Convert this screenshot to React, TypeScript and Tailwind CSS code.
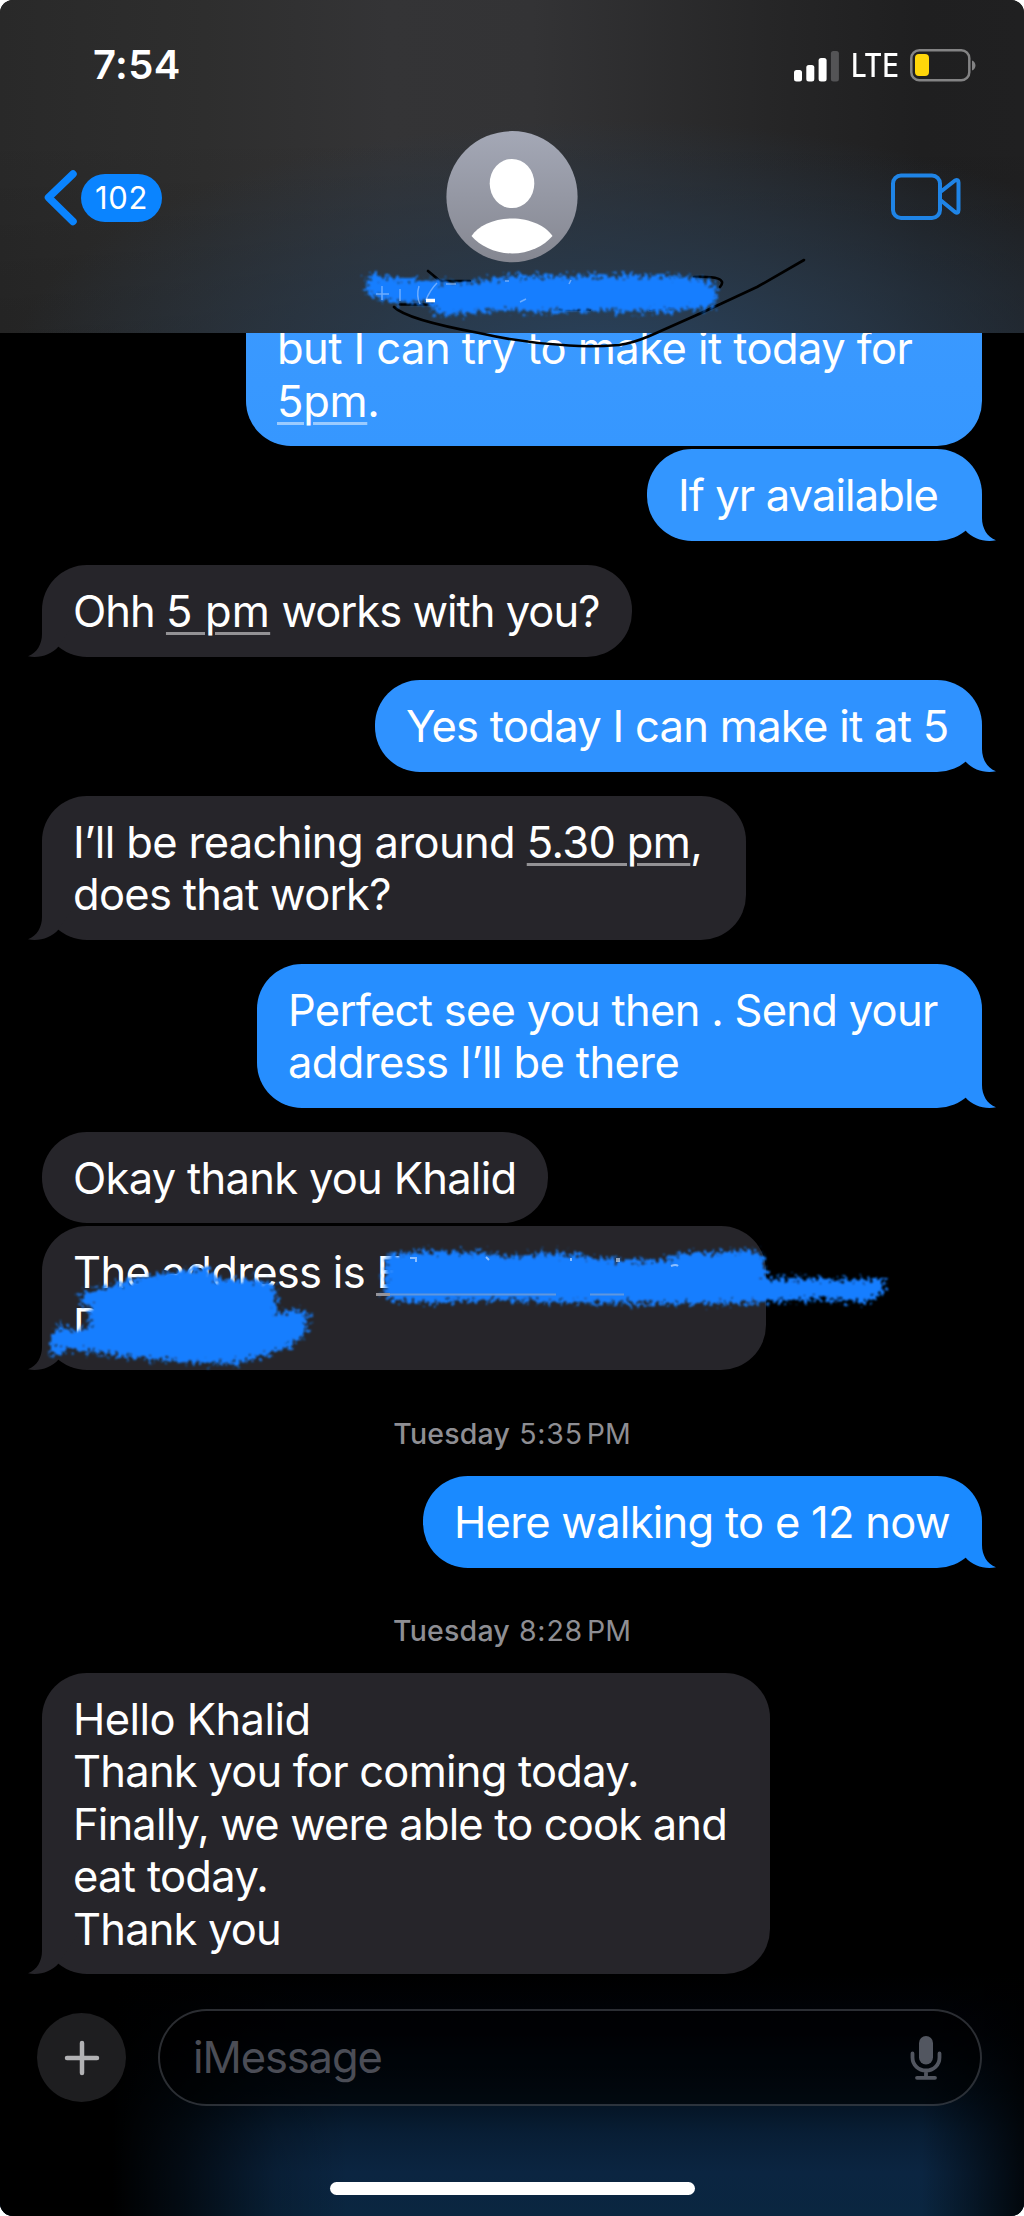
import type { ReactNode } from "react";
import clsx from "clsx";

type Line = { content: ReactNode; tracking: string };

type Message = {
  from: "me" | "them";
  className: string;
  lines: Line[];
  tail?: boolean;
  overlay?: ReactNode;
};

const Detected = ({ children }: { children: ReactNode }) => (
  <span className="underline decoration-white/50 decoration-[3px] underline-offset-[5px]">
    {children}
  </span>
);

// Rough crayon edge used by every marker stroke
const MarkerFilter = ({ id }: { id: string }) => (
  <filter id={id} x="-5%" y="-30%" width="110%" height="160%">
    <feTurbulence
      type="fractalNoise"
      baseFrequency="0.27"
      numOctaves="2"
      seed="7"
      result="noise"
    />
    <feDisplacementMap
      in="SourceGraphic"
      in2="noise"
      scale="21"
      xChannelSelector="R"
      yChannelSelector="G"
    />
    <feGaussianBlur stdDeviation="0.8" />
  </filter>
);

const AddressMarker = () => (
  <svg
    className="pointer-events-none absolute top-0 left-0 z-10"
    width="860"
    height="150"
    viewBox="42 1226 860 150"
    fill="none"
  >
    <defs>
      <MarkerFilter id="marker-address" />
    </defs>
    <g fill="#157eff" filter="url(#marker-address)">
      <path d="M388 1254 L431 1251 L481 1253 L514 1257 L539 1253 L574 1254 L596 1259 L660 1261 L681 1253 L717 1253 L756 1250 L765 1260 L767 1278 L824 1279 L883 1280 L885 1290 L868 1303 L824 1299 L771 1302 L696 1304 L610 1303 L550 1302 L485 1300 L428 1303 L394 1301 L384 1295 L386 1267 Z" />
      <path d="M80 1294 L110 1286 L160 1274 L196 1268 L210 1269 L217 1280 L250 1279 L273 1284 L277 1297 L276 1315 L298 1309 L308 1313 L307 1330 L293 1346 L267 1355 L233 1364 L187 1362 L147 1359 L107 1354 L67 1349 L55 1357 L50 1350 L52 1335 L62 1324 L75 1332 L89 1326 L90 1306 L81 1306 Z" />
    </g>
    <g stroke="#dbeaff" strokeWidth="2" opacity=".6">
      <path d="M410 1258h6v4M486 1257l3 3M571 1258v3M671 1266q5-2 7 0" />
      <path d="M618 1258v4" strokeWidth="4" />
    </g>
    <path
      d="M376 1294.5h14"
      stroke="#93939a"
      strokeWidth="3"
    />
    <path
      d="M390 1294.5h166M590 1294.5h34"
      stroke="#93a9c8"
      strokeWidth="2"
      opacity=".6"
    />
  </svg>
);

const messages: Message[] = [
  {
    from: "me",
    className: "mt-[3px] h-[92px] w-[335px] text-[#3396ff]",
    tail: true,
    lines: [{ content: "If yr available", tracking: "tracking-[-0.9px]" }],
  },
  {
    from: "them",
    className: "mt-[24px] h-[92px] w-[590px]",
    tail: true,
    lines: [
      {
        content: (
          <>
            Ohh{" "}
            <span className="tracking-[0.2px]">
              <Detected>5 pm</Detected>
            </span>{" "}
            works with you?
          </>
        ),
        tracking: "tracking-[-1px]",
      },
    ],
  },
  {
    from: "me",
    className: "mt-[23px] h-[92px] w-[607px] text-[#2f92ff]",
    tail: true,
    lines: [
      {
        content: "Yes today I can make it at 5",
        tracking: "tracking-[-0.72px]",
      },
    ],
  },
  {
    from: "them",
    className: "mt-[24px] h-[144px] w-[704px]",
    tail: true,
    lines: [
      {
        content: (
          <>
            I’ll be reaching around <Detected>5.30 pm</Detected>,
          </>
        ),
        tracking: "tracking-[-0.62px]",
      },
      { content: "does that work?", tracking: "tracking-[-0.7px]" },
    ],
  },
  {
    from: "me",
    className: "mt-[24px] h-[144px] w-[725px] text-[#268eff]",
    tail: true,
    lines: [
      {
        content: "Perfect see you then . Send your",
        tracking: "tracking-[-0.72px]",
      },
      { content: "address I’ll be there", tracking: "tracking-[-0.6px]" },
    ],
  },
  {
    from: "them",
    className: "mt-[24px] h-[91px] w-[506px]",
    lines: [
      { content: "Okay thank you Khalid", tracking: "tracking-[-0.72px]" },
    ],
  },
  {
    from: "them",
    className: "mt-[3px] h-[144px] w-[724px]",
    tail: true,
    lines: [
      { content: "The address is E", tracking: "tracking-[-0.7px]" },
      { content: "D", tracking: "tracking-normal" },
    ],
    overlay: <AddressMarker />,
  },
];

const afternoonMessages: Message[] = [
  {
    from: "me",
    className: "mt-[24px] h-[92px] w-[559px] text-[#1a8aff]",
    tail: true,
    lines: [
      { content: "Here walking to e 12 now", tracking: "tracking-[-0.73px]" },
    ],
  },
];

const eveningMessages: Message[] = [
  {
    from: "them",
    className: "mt-[24px] h-[301px] w-[728px]",
    tail: true,
    lines: [
      { content: "Hello Khalid", tracking: "tracking-[-0.55px]" },
      {
        content: "Thank you for coming today.",
        tracking: "tracking-[-0.78px]",
      },
      {
        content: "Finally, we were able to cook and",
        tracking: "tracking-[-0.85px]",
      },
      { content: "eat today.", tracking: "tracking-[-0.7px]" },
      { content: "Thank you", tracking: "tracking-[-0.83px]" },
    ],
  },
];

function Tail({ mine }: { mine: boolean }) {
  return (
    <svg
      width="54"
      height="46"
      viewBox="0 0 54 46"
      fill="currentColor"
      className={clsx(
        "absolute bottom-0",
        mine ? "-right-[14px]" : "-left-[14px] -scale-x-100",
      )}
    >
      <path d="M0 0H40V23C40 33 45 42 54 45.3C43 47.6 31 44 23.5 35.5Z" />
    </svg>
  );
}

function Bubble({ message }: { message: Message }) {
  const mine = message.from === "me";

  return (
    <div
      className={clsx(
        "relative shrink-0 rounded-[45px] bg-current pt-[20px] pl-[31px]",
        mine ? "self-end" : "self-start text-[#26252a]",
        message.className,
      )}
    >
      {message.tail && <Tail mine={mine} />}
      {message.lines.map((line, index) => (
        <p
          key={index}
          className={clsx(
            "relative whitespace-nowrap text-white",
            line.tracking,
          )}
        >
          {line.content}
        </p>
      ))}
      {message.overlay}
    </div>
  );
}

function Timestamp({ time, className }: { time: string; className: string }) {
  return (
    <div
      className={clsx(
        "flex h-[36px] items-center justify-center text-[28.5px] leading-[36px] text-[#8e8e93]",
        className,
      )}
    >
      <span className="mr-[9px] font-medium tracking-[0.2px]">Tuesday</span>
      <span className="tracking-[0.8px]">{time}</span>
      <span className="ml-[4px]">PM</span>
    </div>
  );
}

function StatusBar() {
  return (
    <div className="flex h-[131px] items-start justify-between pr-[48px] pl-[93px]">
      <span className="mt-[41px] text-[40px] leading-[48px] font-semibold tracking-[0.4px]">
        7:54
      </span>
      <div className="mt-[49px] flex h-[33px] items-center">
        <svg width="46" height="32" viewBox="0 0 46 32" fill="white">
          <rect x="0" y="20" width="8" height="11.5" rx="2.5" />
          <rect x="12.3" y="15" width="8" height="16.5" rx="2.5" />
          <rect x="24.6" y="8" width="8" height="23.5" rx="2.5" />
          <rect
            x="36.9"
            y="1"
            width="8"
            height="30.5"
            rx="2.5"
            fill="#545456"
          />
        </svg>
        <span className="ml-[11px] inline-block w-[47px] origin-left scale-x-[0.87] text-[32px] leading-[33px] font-medium">
          LTE
        </span>
        <svg
          width="66"
          height="33"
          viewBox="0 0 66 33"
          fill="none"
          className="ml-[12px]"
        >
          <rect
            x="1.3"
            y="1.3"
            width="58"
            height="30"
            rx="8"
            stroke="#838384"
            strokeWidth="2.5"
          />
          <rect x="5" y="5" width="14" height="22" rx="4" fill="#ffd60a" />
          <path d="M62 11.5C66.6 13 66.6 20 62 21.5Z" fill="#838384" />
        </svg>
      </div>
    </div>
  );
}

function Header() {
  return (
    <header className="relative z-20 h-[333px] shrink-0 bg-[radial-gradient(ellipse_600px_250px_at_610px_370px,#29435f_0%,#28394bd0_45%,#28303a00_100%),linear-gradient(to_bottom,#00000000_40%,#00000022_100%),linear-gradient(to_right,#292929_0%,#2e2e2e_20%,#343436_38%,#333335_52%,#262627_75%,#1f1f20_90%,#202021_100%)]">
      <StatusBar />
      <div className="grid grid-cols-3 items-start pr-[62px] pl-[44px]">
        <div className="mt-[39px] flex items-center text-[#0a84ff]">
          <svg width="33" height="56" viewBox="0 0 33 56" fill="none">
            <path
              d="M29 4L4.5 27.5L29 51.5"
              stroke="currentColor"
              strokeWidth="7.5"
              strokeLinecap="round"
              strokeLinejoin="round"
            />
          </svg>
          <span className="ml-[4px] flex h-[48px] w-[81px] items-center justify-center rounded-full bg-[#0a84ff] text-[31px] tracking-[0.6px] text-white">
            102
          </span>
        </div>
        <svg
          width="132"
          height="132"
          viewBox="0 0 132 132"
          className="relative left-[9px] justify-self-center"
        >
          <defs>
            <linearGradient id="avatar" x1="0" y1="0" x2="0" y2="1">
              <stop offset="0" stopColor="#a4a8b6" />
              <stop offset="1" stopColor="#858791" />
            </linearGradient>
          </defs>
          <circle cx="66" cy="65.7" r="65.6" fill="url(#avatar)" />
          <ellipse cx="66" cy="52.5" rx="22.3" ry="24.6" fill="white" />
          <path
            d="M25.5 105C32 95 48 87.5 66 87.5C84 87.5 100 95 106.5 105C98 115 83 122.5 66 122.5C49 122.5 34 115 25.5 105Z"
            fill="white"
          />
        </svg>
        <svg
          width="72"
          height="50"
          viewBox="0 0 72 50"
          fill="none"
          className="mt-[41px] justify-self-end"
          stroke="#1f84e6"
          strokeWidth="4"
          strokeLinejoin="round"
        >
          <rect x="3" y="3.5" width="47" height="42.5" rx="8" />
          <path d="M51 19.5L65 8.5Q68.5 7 68.5 10.5V38Q68.5 42 65 40L51 28.5" />
        </svg>
      </div>

      <svg
        className="pointer-events-none absolute top-0 left-0"
        width="1024"
        height="360"
        viewBox="0 0 1024 360"
        fill="none"
      >
        <defs>
          <MarkerFilter id="marker-name" />
        </defs>
        <path
          d="M394 307C404 317 436 325 479 333C510 340 540 344 569 345.5C590 347 606 346 619 345C630 343.5 640 340 649.5 336L699 314L757 287L804 260"
          stroke="black"
          strokeWidth="2.6"
          strokeLinecap="round"
          strokeLinejoin="round"
        />
        <path
          d="M428 271L440 281L470 281M694 277C716 276 727 279 720 287M400 304.5H434M560 309.5H590M650 309.5L682 305"
          stroke="black"
          strokeWidth="2.6"
          strokeLinecap="round"
        />
        <path
          fill="#157eff"
          filter="url(#marker-name)"
          d="M367 276L374 274L390 278L415 279L440 281L460 283L490 279L512 276L560 276L640 275L690 277L710 281L717 289L716 304L704 310L690 308L670 312L600 311L540 312L500 310L470 312L450 315L437 314L431 303L416 303L392 302L376 298L366 292Z"
        />
        <g stroke="#9cc6ff" strokeWidth="1.5" opacity=".65">
          <path d="M382 286V300M376 294H389M400 289V301M419 286Q416 296 420 304M437 283Q430 290 426 300M446 284h10" />
          <path d="M520 302l6-3M569 284l2-4M505 281h4" />
        </g>
        <path d="M426 300.5h9" stroke="white" strokeWidth="3.5" />
      </svg>
    </header>
  );
}

function Composer() {
  return (
    <footer className="relative flex min-h-0 flex-1 flex-col bg-[linear-gradient(to_right,#000_11%,#000000b0_18%,#00000030_27%,#00000000_34%,#00000000_90%,#000000d0_100%),linear-gradient(to_bottom,#000_0%,#01040b_25%,#03101d_48%,#081e35_66%,#0b2541_82%,#0a2640_100%)]">
      <div className="flex items-center pt-[35px] pr-[42px] pl-[37px]">
        <button
          type="button"
          className="flex size-[89px] items-center justify-center rounded-full bg-[#1e1e20]"
        >
          <svg
            width="36"
            height="36"
            viewBox="0 0 36 36"
            stroke="#b2b2b4"
            strokeWidth="4.5"
            strokeLinecap="round"
          >
            <path d="M18 3V33M3 18H33" />
          </svg>
        </button>
        <div className="ml-[32px] flex h-[97px] flex-1 items-center justify-between rounded-full border-[2.5px] border-[#a5afbc42] bg-black/55 pr-[38px] pl-[33px]">
          <span className="text-[43.5px] tracking-[-1.1px] text-[#4b4d56]">
            iMessage
          </span>
          <svg
            width="32"
            height="46"
            viewBox="0 0 32 46"
            fill="none"
            stroke="#525660"
            strokeWidth="3.8"
            strokeLinecap="round"
          >
            <rect
              x="9"
              y="1"
              width="14"
              height="28.5"
              rx="7"
              fill="#525660"
              stroke="none"
            />
            <path d="M2.5 18.5V22.5C2.5 30 8.5 35.5 16 35.5S29.5 30 29.5 22.5V18.5M16 36V42.5M7 42.8H25" />
          </svg>
        </div>
      </div>
      <div className="mt-[76px] h-[13px] w-[365px] self-center rounded-full bg-white" />
    </footer>
  );
}

export default function App() {
  return (
    <div className="h-[2216px] w-[1024px] bg-white">
      <div className="flex h-full flex-col overflow-hidden rounded-[13px] bg-black font-[Inter,sans-serif] text-[43.5px] leading-[52.4px] text-white">
        <Header />
        <main className="flex h-[1641px] shrink-0 flex-col px-[42px]">
          {/* scrolled half under the header */}
          <div className="-mt-[13px] flex h-[126px] w-[736px] shrink-0 flex-col justify-end self-end rounded-b-[45px] bg-gradient-to-b from-[#3a99ff] to-[#3697ff] pb-[19px] pl-[31px]">
            <p className="shrink-0 tracking-[-0.57px] whitespace-nowrap">
              but I can try to make it today for
            </p>
            <p className="shrink-0 tracking-[-0.3px]">
              <Detected>5pm</Detected>.
            </p>
          </div>
          {messages.map((message, index) => (
            <Bubble key={index} message={message} />
          ))}
          <Timestamp time="5:35" className="mt-[46px]" />
          {afternoonMessages.map((message, index) => (
            <Bubble key={index} message={message} />
          ))}
          <Timestamp time="8:28" className="mt-[45px]" />
          {eveningMessages.map((message, index) => (
            <Bubble key={index} message={message} />
          ))}
        </main>
        <Composer />
      </div>
    </div>
  );
}
